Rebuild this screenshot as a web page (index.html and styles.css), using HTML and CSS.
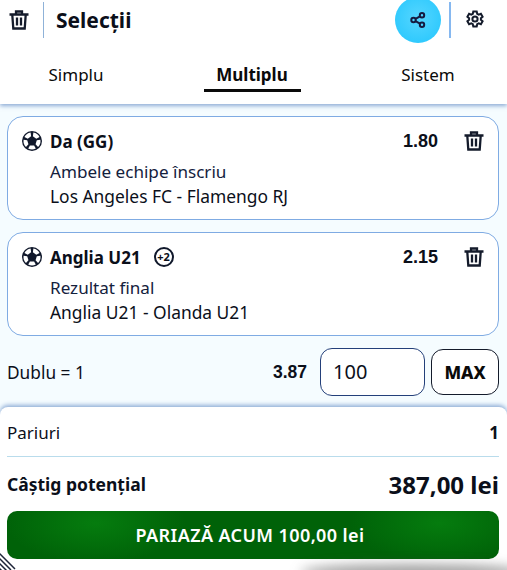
FILE: index.html
```html
<!DOCTYPE html>
<html lang="ro">
<head>
    <meta charset="UTF-8">
    <meta name="viewport" content="width=device-width, initial-scale=1.0">
    <title>Selecții</title>
    <link rel="stylesheet" href="styles.css">
</head>
<body>
    <svg class="defs">
        <symbol id="ball" viewBox="0 0 20 20">
            <circle cx="10" cy="10" r="10"/>
            <g class="patch">
                <path transform="rotate(36 10 10)" d="M7.900 5.600L12.100 5.600L13.800 2.400A8.500 8.500 0 0 0 6.200 2.400Z"/>
                <path transform="rotate(108 10 10)" d="M7.900 5.600L12.100 5.600L13.800 2.400A8.500 8.500 0 0 0 6.200 2.400Z"/>
                <path transform="rotate(180 10 10)" d="M7.900 5.600L12.100 5.600L13.800 2.400A8.500 8.500 0 0 0 6.200 2.400Z"/>
                <path transform="rotate(252 10 10)" d="M7.900 5.600L12.100 5.600L13.800 2.400A8.500 8.500 0 0 0 6.200 2.400Z"/>
                <path transform="rotate(324 10 10)" d="M7.900 5.600L12.100 5.600L13.800 2.400A8.500 8.500 0 0 0 6.200 2.400Z"/>
            </g>
        </symbol>
        <symbol id="trash" viewBox="0 0 20 20">
            <path d="M.5 4.500h19M7 4V1.500h6V4M3.300 5l1 13.500h11.400l1-13.500M8 7.500v8M12 7.500v8"/>
        </symbol>
    </svg>

    <div class="slip">
        <div class="top">
            <div class="header">
                <svg class="icon-trash"><use href="#trash"/></svg>
                <span class="divider"></span>
                <h1>Selecții</h1>
                <button class="share">
                    <svg viewBox="0 0 16 16"><circle cx="3.500" cy="8" r="2.200"/><circle cx="12" cy="3.200" r="2.200"/><circle cx="12" cy="12.800" r="2.200"/><path d="M5.500 6.900l4.500-2.600M5.500 9.100l4.500 2.600"/></svg>
                </button>
                <span class="divider divider-light"></span>
                <svg class="icon-gear" viewBox="0 0 20 20"><path d="M8.300 1.500h3.400l.5 2.300 1.500.8 2.200-.8 1.700 3-1.700 1.500v1.400l1.700 1.500-1.700 3-2.200-.8-1.500.8-.5 2.300H8.300l-.5-2.300-1.500-.8-2.200.8-1.700-3 1.700-1.500V8.300L2.400 6.800l1.700-3 2.200.8 1.500-.8z"/><circle cx="10" cy="9" r="2.600"/></svg>
            </div>
            <div class="tabs">
                <div class="tab">Simplu</div>
                <div class="tab tab-active">Multiplu</div>
                <div class="tab">Sistem</div>
            </div>
        </div>

        <div class="bets">
            <div class="card">
                <div class="card-head">
                    <svg class="icon-ball"><use href="#ball"/></svg>
                    <span class="pick">Da (GG)</span>
                    <span class="odd">1.80</span>
                    <svg class="icon-trash"><use href="#trash"/></svg>
                </div>
                <div class="market">Ambele echipe înscriu</div>
                <div class="match">Los Angeles FC - Flamengo RJ</div>
            </div>
            <div class="card">
                <div class="card-head">
                    <svg class="icon-ball"><use href="#ball"/></svg>
                    <span class="pick">Anglia U21</span>
                    <span class="plus">+2</span>
                    <span class="odd">2.15</span>
                    <svg class="icon-trash"><use href="#trash"/></svg>
                </div>
                <div class="market">Rezultat final</div>
                <div class="match">Anglia U21 - Olanda U21</div>
            </div>
            <div class="stake">
                <span class="stake-label">Dublu = 1</span>
                <span class="stake-odd">3.87</span>
                <div class="stake-input">100</div>
                <button class="max">MAX</button>
            </div>
        </div>

        <div class="summary">
            <div class="row row-bets">
                <span>Pariuri</span>
                <b>1</b>
            </div>
            <div class="row row-win">
                <b>Câștig potențial</b>
                <b class="win">387,00 lei</b>
            </div>
            <button class="place">PARIAZĂ ACUM 100,00 lei</button>
        </div>

        <div class="edge-shadow"></div>
        <svg class="hatch" viewBox="0 0 16 20"><path d="M-2 2l17 17M-2 7l13 13M-2 12l9 9M-2 17l5 5"/></svg>
    </div>
</body>
</html>
```
FILE: styles.css
```css
* {
    box-sizing: border-box;
}
body {
    margin: 0;
    font-family: "Noto Sans", "Open Sans", sans-serif;
    color: #0b0f1a;
    background-color: #f5fcff;
}
.defs {
    display: none;
}
.slip {
    position: relative;
    width: 507px;
    height: 570px;
    overflow: hidden;
    display: flex;
    flex-direction: column;
}
button {
    font-family: inherit;
    cursor: pointer;
}
.top {
    height: 104px;
    background-color: white;
    box-shadow: 0 2px 4px rgba(60, 110, 180, 0.55);
    position: relative;
}
.header {
    display: flex;
    align-items: center;
    height: 40px;
    padding-left: 9px;
}
.divider {
    width: 1px;
    height: 36px;
    margin: 0 12px 0 14px;
    background-color: #8fb2d8;
}
.divider-light {
    width: 2px;
    margin: 0 14px 0 8px;
    background-color: #86b8f0;
}
h1 {
    margin: 0;
    font-size: 21px;
    font-weight: 700;
    flex: 1;
}
.icon-trash {
    width: 20px;
    height: 20px;
    fill: none;
    stroke: #141b2b;
    stroke-width: 2.300;
    flex-shrink: 0;
}
.share {
    width: 46px;
    height: 46px;
    padding: 0;
    border: none;
    border-radius: 50%;
    background: radial-gradient(circle at 50% 45%, #55d6ff, #22c5fd);
    display: flex;
    align-items: center;
    justify-content: center;
}
.share svg {
    width: 16px;
    height: 16px;
    fill: none;
    stroke: #151b40;
    stroke-width: 2;
}
.icon-gear {
    width: 20px;
    height: 20px;
    fill: none;
    stroke: #141b2b;
    stroke-width: 2;
    margin-right: 22px;
}
.tabs {
    display: grid;
    grid-template-columns: repeat(3, 176px);
    margin: 24px 0 0 -12px;
}
.tab {
    font-size: 17px;
    line-height: 22px;
    text-align: center;
    color: #0a0a0a;
}
.tab-active {
    font-weight: 700;
    position: relative;
}
.tab-active::after {
    content: "";
    position: absolute;
    left: 40px;
    right: 39px;
    top: 25px;
    height: 3px;
    background-color: #0a0a0a;
}
.bets {
    padding: 12px 8px 0 7px;
    flex: 1;
    display: flex;
    flex-direction: column;
    gap: 12px;
}
.card {
    height: 104px;
    padding: 13px 14px 0 14px;
    border: 1px solid #7fabe3;
    border-radius: 16px;
    background-color: white;
}
.card-head {
    display: flex;
    align-items: center;
    height: 22px;
    margin-bottom: 8px;
}
.icon-ball {
    width: 20px;
    height: 20px;
    margin-right: 8px;
    fill: #10182b;
}
.patch {
    fill: white;
}
.pick {
    font-size: 17px;
    font-weight: 700;
}
.plus {
    width: 20px;
    height: 20px;
    margin-left: 13px;
    border: 2px solid #10182b;
    border-radius: 50%;
    font-size: 11px;
    font-weight: 700;
    line-height: 15px;
    text-align: center;
}
.odd {
    margin-left: auto;
    margin-right: 26px;
    font-family: "Liberation Sans", sans-serif;
    font-size: 18px;
    font-weight: 700;
}
.market,
.match {
    margin-left: 28px;
    font-size: 17.400px;
    line-height: 24px;
}
.market {
    font-size: 17.100px;
    color: #14213d;
}
.stake {
    display: flex;
    align-items: center;
    height: 48px;
}
.stake-label {
    font-size: 17.300px;
    flex: 1;
}
.stake-odd {
    margin-right: 13px;
    font-family: "Liberation Sans", sans-serif;
    font-size: 17.500px;
    font-weight: 700;
}
.stake-input {
    width: 105px;
    height: 48px;
    padding-left: 12px;
    border: 1px solid #24407a;
    border-radius: 12px;
    background-color: white;
    font-size: 20px;
    line-height: 46px;
}
.max {
    width: 68px;
    height: 46px;
    margin-left: 6px;
    padding: 0;
    border: 1px solid #141b2b;
    border-radius: 12px;
    background-color: white;
    font-size: 17.500px;
    font-weight: 800;
    color: #0a0a0a;
}
.summary {
    height: 163px;
    padding: 0 8px 0 7px;
    border-radius: 8px 8px 0 0;
    background-color: white;
    box-shadow: 0 -2px 4px rgba(60, 110, 180, 0.55);
    display: flex;
    flex-direction: column;
}
.row {
    display: flex;
    align-items: center;
    justify-content: space-between;
    font-size: 17px;
}
.row-bets {
    height: 50px;
    padding-top: 2px;
    border-bottom: 1px solid #b9dcec;
}
.row-win {
    height: 54px;
}
.row-win b:first-child {
    font-size: 17.500px;
}
.win {
    font-size: 24px;
}
.place {
    height: 48px;
    padding: 0 6px 0 0;
    border: none;
    border-radius: 10px;
    background: radial-gradient(ellipse 90px 40px at 18% 25%, #057c0e, transparent),
        radial-gradient(ellipse 90px 40px at 88% 25%, #057c0e, transparent),
        #006208;
    color: white;
    font-size: 18px;
    font-weight: 600;
    letter-spacing: 0.400px;
}
.edge-shadow {
    position: absolute;
    left: 300px;
    right: -20px;
    bottom: -10px;
    height: 16px;
    border-radius: 50%;
    background-color: rgba(70, 70, 70, 0.5);
    filter: blur(6px);
}
.hatch {
    position: absolute;
    left: 0;
    bottom: 0;
    width: 16px;
    height: 20px;
    fill: none;
    stroke: #1d2438;
    stroke-width: 1.500;
}
```
